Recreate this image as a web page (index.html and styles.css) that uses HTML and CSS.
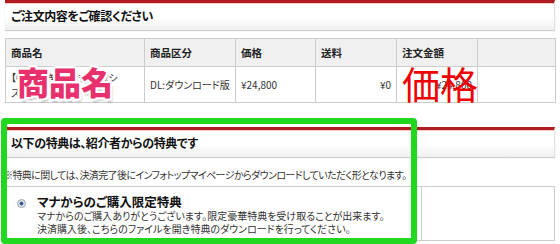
FILE: index.html
```html
<!DOCTYPE html>
<html lang="ja">
<head>
<meta charset="utf-8">
<title>ご注文内容をご確認ください</title>
<link rel="stylesheet" href="styles.css">
</head>
<body>
<div class="page">
  <div class="sec-head">ご注文内容をご確認ください</div>

  <table class="order">
    <colgroup>
      <col class="c1"><col class="c2"><col class="c3"><col class="c4"><col class="c5"><col class="c6">
    </colgroup>
    <thead>
      <tr>
        <th>商品名</th>
        <th>商品区分</th>
        <th>価格</th>
        <th>送料</th>
        <th>注文金額</th>
        <th></th>
      </tr>
    </thead>
    <tbody>
      <tr>
        <td class="name">【特典付き】マナ式作成シ<br>ステム</td>
        <td>DL:ダウンロード版</td>
        <td>¥24,800</td>
        <td class="num">¥0</td>
        <td class="num">¥24,800</td>
        <td></td>
      </tr>
    </tbody>
  </table>

  <div class="sec-head sec2">以下の特典は、紹介者からの特典です</div>
  <p class="note">※特典に関しては、決済完了後にインフォトップマイページからダウンロードしていただく形となります。</p>

  <div class="bonus">
    <div class="bonus-main">
      <span class="radio"></span>
      <div class="bonus-text">
        <div class="bonus-title">マナからのご購入限定特典</div>
        <div>マナからのご購入ありがとうございます。限定豪華特典を受け取ることが出来ます。</div>
        <div>決済購入後、こちらのファイルを開き特典のダウンロードを行ってください。</div>
      </div>
    </div>
    <div class="bonus-side"></div>
  </div>
</div>

<div class="label-name">商品名</div>
<div class="label-price">価格</div>
<div class="green-frame"></div>
</body>
</html>
```

FILE: styles.css
```css
html, body {
  margin: 0;
  padding: 0;
  background: #fff;
}
body {
  width: 560px;
  height: 244px;
  overflow: hidden;
  position: relative;
  font-family: "Noto Sans CJK JP", "Noto Sans", sans-serif;
  font-feature-settings: "palt";
  color: #222;
}
.page {
  padding: 0 5px;
}
.sec-head {
  height: 27px;
  border-top: 3px solid #b01b20;
  background: linear-gradient(#ffffff 0%, #ffffff 55%, #efefef 100%);
  box-shadow: 0 1px 1px #cfcfcf, inset 0 1px 0 #f6c9c9;
  border-right: 1px solid #e2e2e2;
  padding-left: 6px;
  font-size: 12px;
  letter-spacing: -0.4px;
  font-weight: bold;
  line-height: 26px;
  color: #111;
}
.order {
  margin-top: 8px;
  width: 550px;
  border-collapse: collapse;
  table-layout: fixed;
  font-size: 10px;
}
.c1 { width: 139px; }
.c2 { width: 91px; }
.c3 { width: 80px; }
.c4 { width: 81px; }
.c5 { width: 81px; }
.c6 { width: 78px; }
.order th, .order td {
  border: 1px solid #cccccc;
  padding: 0 5px;
  text-align: left;
  vertical-align: middle;
}
.order th {
  height: 27px;
  background: #f0f0f0;
  font-weight: bold;
  font-size: 10.5px;
}
.order td {
  height: 35px;
  color: #333;
}
.order td.name {
  line-height: 15px;
  font-size: 10px;
}
.order td.num {
  text-align: right;
}
.sec2 {
  margin-top: 24px;
}
.note {
  margin: 11px 0 0 -2px;
  font-size: 10px;
  letter-spacing: -0.6px;
  line-height: 14px;
  white-space: nowrap;
  color: #333;
}
.bonus {
  margin-top: 4px;
  display: grid;
  grid-template-columns: 415px 1fr;
  border: 1px solid #cccccc;
  height: 53px;
}
.bonus-main {
  display: flex;
  align-items: flex-start;
  padding: 8px 0 0 11px;
  gap: 11px;
}
.bonus-side {
  border-left: 1px solid #cccccc;
}
.radio {
  margin-top: 4px;
  width: 7px;
  height: 7px;
  border-radius: 50%;
  border: 1px solid #9aa3ad;
  background: radial-gradient(circle, #2b4f86 0, #3d63a0 35%, #d7dde5 45%, #eef1f4 100%);
  flex: none;
}
.bonus-text {
  font-size: 10px;
  line-height: 13px;
  color: #333;
  white-space: nowrap;
}
.bonus-title {
  font-size: 12.5px;
  font-weight: bold;
  color: #111;
  line-height: 14px;
}
.label-name {
  position: absolute;
  left: 17px;
  top: 59px;
  font-size: 32px;
  font-weight: 900;
  line-height: 44px;
  color: #e8306c;
  text-shadow:
    -2px -2px 0 #fff, 2px -2px 0 #fff, -2px 2px 0 #fff, 2px 2px 0 #fff,
    0 -2px 0 #fff, 0 2px 0 #fff, -2px 0 0 #fff, 2px 0 0 #fff,
    2px 3px 2px rgba(0,0,0,0.35);
  font-feature-settings: normal;
}
.label-price {
  position: absolute;
  left: 402px;
  top: 58px;
  font-size: 38px;
  line-height: 50px;
  color: #ee0000;
  font-feature-settings: normal;
}
.green-frame {
  position: absolute;
  left: 1px;
  top: 118px;
  width: 404px;
  height: 114px;
  border: 6px solid #1fd81f;
  border-radius: 4px;
}
```
